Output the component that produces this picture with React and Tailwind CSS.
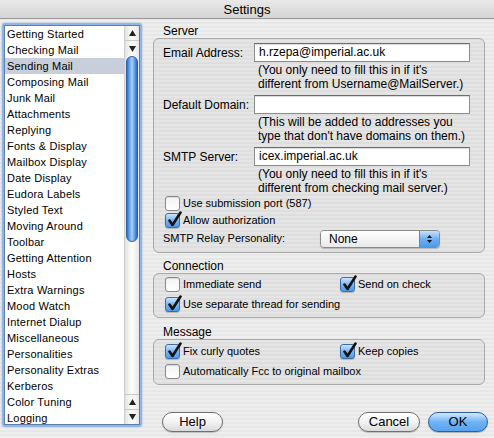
import React from "react";

const prefs = [
  "Getting Started",
  "Checking Mail",
  "Sending Mail",
  "Composing Mail",
  "Junk Mail",
  "Attachments",
  "Replying",
  "Fonts & Display",
  "Mailbox Display",
  "Date Display",
  "Eudora Labels",
  "Styled Text",
  "Moving Around",
  "Toolbar",
  "Getting Attention",
  "Hosts",
  "Extra Warnings",
  "Mood Watch",
  "Internet Dialup",
  "Miscellaneous",
  "Personalities",
  "Personality Extras",
  "Kerberos",
  "Color Tuning",
  "Logging",
];

const Arrow = ({ up }) => (
  <svg width="7" height="6" viewBox="0 0 7 6">
    <path d={up ? "M3.5 0 L7 6 L0 6 Z" : "M0 0 L7 0 L3.5 6 Z"} fill="#222" />
  </svg>
);

const Check = ({ checked }) =>
  checked ? (
    <span className="relative shrink-0 w-[15px] h-[15px] rounded-[3px] border border-[#3d6ea8] bg-gradient-to-b from-[#c9e4fc] via-[#79b6f2] to-[#4a9ae9] shadow-[0_1px_1px_rgba(0,0,0,0.2)]">
      <svg className="absolute left-[1px] -top-[3px]" width="16" height="17" viewBox="0 0 16 17">
        <path d="M2.5 9.5 L5.5 14 L13.5 1.5" fill="none" stroke="#111" strokeWidth="2.6" strokeLinecap="round" strokeLinejoin="round" />
      </svg>
    </span>
  ) : (
    <span className="shrink-0 w-[15px] h-[15px] rounded-[3px] border border-[#8a8a8a] bg-gradient-to-b from-[#f4f4f4] to-white shadow-[inset_0_1px_1px_rgba(0,0,0,0.12)]" />
  );

const CheckRow = ({ checked, label, className = "" }) => (
  <div className={`flex items-center gap-[3px] text-[11px] ${className}`}>
    <Check checked={checked} />
    <span>{label}</span>
  </div>
);

const Field = ({ value }) => (
  <div className="w-[216px] h-[19px] bg-white border border-[#8c8c8c] border-t-[#6e6e6e] shadow-[inset_0_1px_1px_rgba(0,0,0,0.15)] pl-[4px] leading-[17px]">
    {value}
  </div>
);

const Hint = ({ children }) => (
  <div className="ml-[95px] mt-[2px] leading-[13.5px]">{children}</div>
);

const Group = ({ className = "", children }) => (
  <div className={`w-[332px] rounded-[6px] border border-[#a9a9a9] bg-black/[0.035] ${className}`}>
    {children}
  </div>
);

const Button = ({ children, primary, className = "" }) => (
  <div
    className={`h-[20px] rounded-full border flex items-center justify-center text-[13px] ${
      primary
        ? "border-[#2f5f99] bg-gradient-to-b from-[#d2e8fd] via-[#6fb2f3] to-[#57a4f0] shadow-[0_1px_1px_rgba(0,0,0,0.25)]"
        : "border-[#6f6f6f] bg-gradient-to-b from-white via-[#f3f3f3] to-[#dadada] shadow-[0_1px_1px_rgba(0,0,0,0.2)]"
    } ${className}`}
  >
    {children}
  </div>
);

export default function App() {
  return (
    <div className="w-[494px] h-[438px] overflow-hidden flex flex-col text-black font-['Liberation_Sans',Arial,sans-serif] bg-[repeating-linear-gradient(180deg,#eeeeee_0px,#eeeeee_2px,#e7e7e7_2px,#e7e7e7_4px)]">
      {/* title bar */}
      <div className="h-[19px] shrink-0 border-b border-[#999999] bg-gradient-to-b from-[#e9e9e9] to-[#d4d4d4] flex items-center justify-center text-[13px] leading-none">
        Settings
      </div>

      <div className="flex items-start">
        {/* preference list */}
        <div className="ml-[2px] mt-[4px] w-[140px] h-[404px] rounded-[3px] border-2 border-[#8fb5e4] shadow-[0_0_2px_#8fb5e4]">
          <div className="flex h-full border border-[#5f7fa8] bg-white">
            <div className="flex-1 text-[11px] tracking-[0.2px]">
              {prefs.map((p) => (
                <div
                  key={p}
                  className={`h-[16px] leading-[16px] pl-[2px] ${p === "Sending Mail" ? "bg-[#c8cfdb]" : ""}`}
                >
                  {p}
                </div>
              ))}
            </div>
            <div className="w-[15px] flex flex-col border-l border-[#cfcfcf] bg-gradient-to-r from-[#e2e2e2] via-white to-[#e6e6e6]">
              <div className="h-[15px] flex items-center justify-center border-b border-[#c8c8c8]">
                <Arrow up />
              </div>
              <div className="h-[15px] flex items-center justify-center">
                <Arrow />
              </div>
              <div className="mx-[1px] h-[186px] rounded-full border border-[#2e5fa8] bg-gradient-to-r from-[#2f6fd1] via-[#a5d0f7] to-[#2b67c9]" />
              <div className="flex-1" />
              <div className="h-[15px] flex items-center justify-center border-t border-[#c8c8c8]">
                <Arrow up />
              </div>
              <div className="h-[15px] flex items-center justify-center border-t border-[#c8c8c8]">
                <Arrow />
              </div>
            </div>
          </div>
        </div>

        {/* settings panel */}
        <div className="ml-[11px] w-[335px] text-[12px]">
          <div className="mt-[5px] h-[14px] leading-[14px] pl-[10px]">Server</div>
          <Group className="pl-[9px] pt-[4px] pb-[4px]">
            <div className="flex items-center">
              <span className="w-[91px]">Email Address:</span>
              <Field value="h.rzepa@imperial.ac.uk" />
            </div>
            <Hint>
              (You only need to fill this in if it's
              <br />
              different from Username@MailServer.)
            </Hint>
            <div className="flex items-center mt-[4px]">
              <span className="w-[91px]">Default Domain:</span>
              <Field value="" />
            </div>
            <Hint>
              (This will be added to addresses you
              <br />
              type that don't have domains on them.)
            </Hint>
            <div className="flex items-center mt-[4px]">
              <span className="w-[91px]">SMTP Server:</span>
              <Field value="icex.imperial.ac.uk" />
            </div>
            <Hint>
              (You only need to fill this in if it's
              <br />
              different from checking mail server.)
            </Hint>
            <CheckRow className="h-[17px] ml-[2px]" checked={false} label="Use submission port (587)" />
            <CheckRow className="h-[17px] ml-[2px]" checked label="Allow authorization" />
            <div className="flex items-center h-[19px] text-[11px]">
              <span className="w-[157px]">SMTP Relay Personality:</span>
              <div className="flex w-[120px] h-[18px] rounded-[4px] border border-[#8a8a8a] overflow-hidden shadow-[0_1px_1px_rgba(0,0,0,0.2)]">
                <div className="flex-1 pl-[8px] leading-[16px] text-[12px] bg-gradient-to-b from-white to-[#e9e9e9]">None</div>
                <div className="w-[20px] flex flex-col items-center justify-center gap-[2px] border-l border-[#5b86c0] bg-gradient-to-b from-[#c6e1fb] via-[#6eb0f0] to-[#4b9ae8]">
                  <svg width="5" height="3" viewBox="0 0 5 3">
                    <path d="M2.5 0 L5 3 L0 3 Z" fill="#111" />
                  </svg>
                  <svg width="5" height="3" viewBox="0 0 5 3">
                    <path d="M0 0 L5 0 L2.5 3 Z" fill="#111" />
                  </svg>
                </div>
              </div>
            </div>
          </Group>

          <div className="mt-[6px] h-[14px] leading-[14px] pl-[10px]">Connection</div>
          <Group className="pl-[11px] pt-[2px] pb-[5px]">
            <div className="grid grid-cols-[175px_1fr]">
              <CheckRow className="h-[16px]" checked={false} label="Immediate send" />
              <CheckRow className="h-[16px]" checked label="Send on check" />
            </div>
            <CheckRow className="h-[16px] mt-[4px]" checked label="Use separate thread for sending" />
          </Group>

          <div className="mt-[7px] h-[14px] leading-[14px] pl-[10px]">Message</div>
          <Group className="pl-[11px] pt-[3px] pb-[5px]">
            <div className="grid grid-cols-[175px_1fr]">
              <CheckRow className="h-[16px]" checked label="Fix curly quotes" />
              <CheckRow className="h-[16px]" checked label="Keep copies" />
            </div>
            <CheckRow className="h-[16px] mt-[4px]" checked={false} label="Automatically Fcc to original mailbox" />
          </Group>

          <div className="mt-[27px] flex items-center pl-[9px]">
            <Button className="w-[61px]">Help</Button>
            <div className="flex-1" />
            <Button className="w-[62px]">Cancel</Button>
            <Button primary className="w-[60px] ml-[8px]">OK</Button>
          </div>
        </div>
      </div>
    </div>
  );
}
